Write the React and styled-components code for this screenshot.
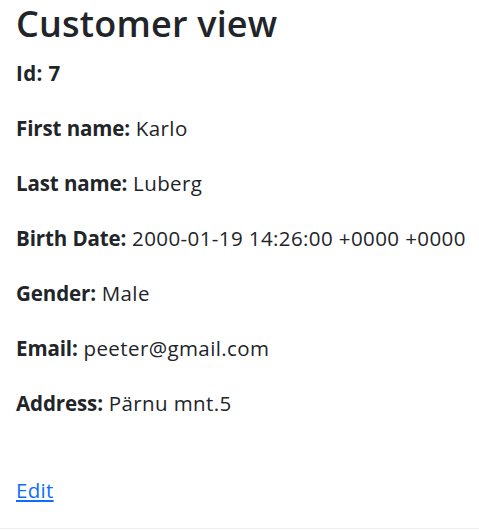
import styled, { createGlobalStyle } from 'styled-components';

const GlobalStyle = createGlobalStyle`
  body {
    margin: 0;
    background: #fff;
    color: #212529;
    font-family: "Open Sans", "Noto Sans", sans-serif;
  }
`;

const Page = styled.div`
  min-height: 530px;
  box-sizing: border-box;
  display: flex;
  flex-direction: column;
`;

const Main = styled.main`
  flex: 1;
  padding: 0 16px;
`;

const Title = styled.h1`
  margin: 0 0 10px;
  font-size: 36px;
  line-height: 48px;
  font-weight: 600;
  letter-spacing: 0.2px;
`;

const Field = styled.p`
  margin: 0 0 25px;
  font-size: 20.5px;
  line-height: 30px;
  letter-spacing: 0.4px;
  white-space: nowrap;
  font-weight: ${(p) => (p.$bold ? 700 : 400)};
`;

const Label = styled.b`
  font-weight: 700;
  letter-spacing: -0.1px;
`;

const Actions = styled.div`
  margin-top: 57px;
  font-size: 20.5px;
  line-height: 30px;
  letter-spacing: 0.3px;
`;

const EditLink = styled.a`
  color: #0d6efd;
  text-decoration: underline;
`;

const Footer = styled.footer`
  height: 1px;
  border-top: 1px solid #eeeeee;
`;

const customer = [
  ['First name', 'Karlo'],
  ['Last name', 'Luberg'],
  ['Birth Date', '2000-01-19 14:26:00 +0000 +0000'],
  ['Gender', 'Male'],
  ['Email', 'peeter@gmail.com'],
  ['Address', 'Pärnu mnt.5'],
];

export default function App() {
  return (
    <Page>
      <GlobalStyle />
      <Main>
        <Title>Customer view</Title>
        <Field $bold>Id: 7</Field>
        {customer.map(([label, value]) => (
          <Field key={label}>
            <Label>{label}:</Label> {value}
          </Field>
        ))}
        <Actions>
          <EditLink href="#">Edit</EditLink>
        </Actions>
      </Main>
      <Footer />
    </Page>
  );
}
